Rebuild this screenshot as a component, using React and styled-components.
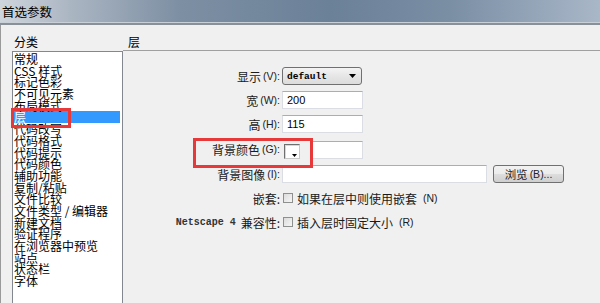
import React from "react";
import styled, { createGlobalStyle } from "styled-components";

const GlobalStyle = createGlobalStyle`
    html, body {
        margin: 0;
        padding: 0;
        background: #f0f0f0;
        overflow: hidden;
    }
    body {
        font-family: "Noto Sans CJK SC", "Liberation Sans", sans-serif;
        font-size: 12px;
        color: #000;
    }
`;

const Window = styled.div`
    position: relative;
    width: 600px;
    height: 303px;
    display: flex;
    flex-direction: column;
    overflow: hidden;
    background: #f0f0f0;
`;

const TitleBar = styled.div`
    height: 23px;
    flex: none;
    display: flex;
    align-items: center;
    padding-left: 2px;
    font-size: 12.5px;
    line-height: 14px;
    background: linear-gradient(90deg, #cfd5dc 0%, #aab5c2 12%, #7d8fa3 30%, #6b8198 55%, #7a8ea4 75%, #9aaabd 92%, #a9b7c7 100%);
    box-shadow: inset 0 -1px 0 #c9cfd6;
    border-bottom: 2px solid #8a9097;
`;

const Body = styled.div`
    flex: 1;
    display: flex;
    min-height: 0;
    border-left: 1px solid #9a9a9a;
`;

const LeftColumn = styled.div`
    width: 111px;
    margin-left: 11px;
    display: flex;
    flex-direction: column;
`;

const SectionLabel = styled.div`
    height: 26px;
    flex: none;
    box-sizing: border-box;
    padding: 10px 0 0 2px;
    line-height: 13px;
    font-size: 12px;
`;

const ListBox = styled.div`
    flex: 1;
    background: #fff;
    border: 1px solid #828790;
    border-bottom: none;
    padding-top: 1px;
`;

const ListItem = styled.div`
    height: 11.7px;
    line-height: 11.7px;
    margin: 0 2px 0 0;
    padding-left: 1px;
    white-space: nowrap;
    font-size: 12px;
    background: ${props => (props.selected ? "#3399ff" : "transparent")};
    color: ${props => (props.selected ? "#fff" : "#000")};
`;

const RightColumn = styled.div`
    flex: 1;
    display: flex;
    flex-direction: column;
`;

const PanelHeader = styled.div`
    height: 26px;
    flex: none;
    box-sizing: border-box;
    padding: 10px 0 0 5px;
    line-height: 13px;
    border-bottom: 1px solid #a0a0a0;
`;

const Form = styled.div`
    display: grid;
    grid-template-columns: 157px 1fr;
    grid-template-rows: 18px 18px 18px 20px 18px 18px 18px;
    row-gap: 6px;
    column-gap: 2px;
    padding-top: 16px;
`;

const Label = styled.div`
    display: flex;
    align-items: center;
    justify-content: flex-end;
    white-space: nowrap;
    font-size: 12px;
    color: #1a1a1a;
`;

const Key = styled.span`
    font-family: "Liberation Sans", sans-serif;
    font-size: 10.5px;
    margin-left: 2px;
`;

const MonoText = styled.span`
    font-family: "Liberation Mono", monospace;
    font-size: 10px;
    font-weight: bold;
    color: #333;
    margin-right: 5px;
`;

const Control = styled.div`
    display: flex;
    align-items: ${props => props.align || "center"};
    gap: ${props => props.gap || "0"};
`;

const Select = styled.div`
    width: 80px;
    height: 18px;
    box-sizing: border-box;
    border: 1px solid #707070;
    border-radius: 3px;
    background: linear-gradient(#f4f4f4, #e6e6e6 50%, #dcdcdc);
    display: flex;
    align-items: center;
    justify-content: space-between;
    padding: 0 5px 0 4px;
    font-family: "Liberation Mono", monospace;
    font-weight: bold;
    font-size: 9.5px;
`;

const TextInput = styled.div`
    width: ${props => props.width || "81px"};
    height: 18px;
    box-sizing: border-box;
    background: #fff;
    border: 1px solid #dadde3;
    border-top-color: #abadb3;
    padding-left: 4px;
    font-family: "Liberation Sans", sans-serif;
    font-size: 11px;
    line-height: 16px;
`;

const Swatch = styled.div`
    position: relative;
    width: 16px;
    height: 15px;
    margin-left: 2px;
    box-sizing: border-box;
    border: 1px solid #6f6f6f;
    border-right-color: #c8c8c8;
    border-bottom-color: #c8c8c8;
    background: #fff;
    box-shadow: inset 1px 1px 0 #d8d8d8;
`;

const SwatchArrow = styled.svg`
    position: absolute;
    right: 2px;
    bottom: 1px;
`;

const Button = styled.div`
    width: 71px;
    height: 18px;
    box-sizing: border-box;
    margin-left: 6px;
    border: 1px solid #707070;
    border-radius: 3px;
    background: linear-gradient(#f2f2f2, #ebebeb 50%, #dddddd 51%, #cfcfcf);
    display: flex;
    align-items: center;
    justify-content: center;
    font-size: 11.5px;
    color: #222;
    white-space: nowrap;
`;

const CheckRow = styled.label`
    display: flex;
    align-items: center;
    gap: 4px;
    white-space: nowrap;
    font-size: 12px;
    color: #1a1a1a;
`;

const CheckBox = styled.span`
    width: 10px;
    height: 10px;
    margin-left: 1px;
    box-sizing: border-box;
    border: 1px solid #8e8f8f;
    background: linear-gradient(135deg, #dcdcdc, #f6f6f6);
`;

const Callout = styled.div`
    position: absolute;
    left: ${props => props.x}px;
    top: ${props => props.y}px;
    width: ${props => props.w}px;
    height: ${props => props.h}px;
    box-sizing: border-box;
    border: 3px solid #e8393a;
    pointer-events: none;
`;

const categories = [
    "常规",
    "CSS 样式",
    "标记色彩",
    "不可见元素",
    "布局模式",
    "层",
    "代码改写",
    "代码格式",
    "代码提示",
    "代码颜色",
    "辅助功能",
    "复制/粘贴",
    "文件比较",
    "文件类型 / 编辑器",
    "新建文档",
    "验证程序",
    "在浏览器中预览",
    "站点",
    "状态栏",
    "字体",
];

const Arrow = () => (
    <svg width="7" height="4" viewBox="0 0 7 4">
        <path d="M0 0 H7 L3.5 4 Z" fill="#000" />
    </svg>
);

const App = () => {
    return (
        <>
            <GlobalStyle />
            <Window>
                <TitleBar>首选参数</TitleBar>
                <Body>
                    <LeftColumn>
                        <SectionLabel>分类</SectionLabel>
                        <ListBox>
                            {categories.map(name => (
                                <ListItem key={name} selected={name === "层"}>{name}</ListItem>
                            ))}
                        </ListBox>
                    </LeftColumn>

                    <RightColumn>
                        <PanelHeader>层</PanelHeader>
                        <Form>
                            <Label>显示<Key>(V):</Key></Label>
                            <Control>
                                <Select>
                                    <span>default</span>
                                    <Arrow />
                                </Select>
                            </Control>

                            <Label>宽<Key>(W):</Key></Label>
                            <Control><TextInput>200</TextInput></Control>

                            <Label>高<Key>(H):</Key></Label>
                            <Control><TextInput>115</TextInput></Control>

                            <Label>背景颜色<Key>(G):</Key></Label>
                            <Control align="flex-end" gap="10px">
                                <Swatch>
                                    <SwatchArrow width="5" height="3" viewBox="0 0 5 3">
                                        <path d="M0 0 H5 L2.5 3 Z" fill="#000" />
                                    </SwatchArrow>
                                </Swatch>
                                <TextInput width="53px" />
                            </Control>

                            <Label>背景图像<Key>(I):</Key></Label>
                            <Control>
                                <TextInput width="205px" />
                                <Button>浏览<Key>(B)...</Key></Button>
                            </Control>

                            <Label>嵌套:</Label>
                            <Control>
                                <CheckRow><CheckBox />如果在层中则使用嵌套<Key>(N)</Key></CheckRow>
                            </Control>

                            <Label><MonoText>Netscape 4</MonoText>兼容性:</Label>
                            <Control>
                                <CheckRow><CheckBox />插入层时固定大小<Key>(R)</Key></CheckRow>
                            </Control>
                        </Form>
                    </RightColumn>
                </Body>
                <Callout x={11} y={108} w={60} h={20} />
                <Callout x={193} y={138} w={120} h={30} />
            </Window>
        </>
    );
};

export default App;
